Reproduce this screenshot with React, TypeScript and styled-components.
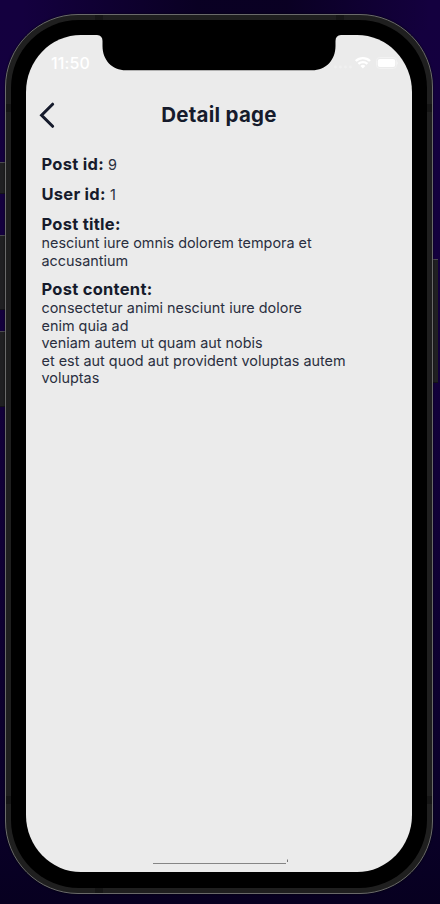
import React from "react";
import styled, { createGlobalStyle } from "styled-components";

const GlobalStyle = createGlobalStyle`
  * { box-sizing: border-box; }
  html, body { margin: 0; padding: 0; }
  body { width: 440px; height: 904px; overflow: hidden; background: #0c0028; }
`;

const Desktop = styled.div`
  position: relative;
  width: 440px;
  height: 904px;
  padding: 14px 7px 10px 5px;
  overflow: hidden;
  font-family: Inter, "Liberation Sans", sans-serif;
  background:
    linear-gradient(90deg, transparent 5%, rgba(8, 0, 30, 0.85) 45%, rgba(8, 0, 30, 0.85) 65%, transparent 98%) top / 100% 30px no-repeat,
    linear-gradient(180deg, #14003f 0%, #14003e 30%, #100036 60%, #0a0029 90%, #070020 100%);
`;

const SideButton = styled.div<{ $side: "left" | "right"; $top: number; $height: number }>`
  position: absolute;
  ${(p) => (p.$side === "left" ? "left: -2px; width: 8px;" : "left: 432px; width: 6px;")}
  top: ${(p) => p.$top}px;
  height: ${(p) => p.$height}px;
  background: #202022;
  border-top: 1px solid #4b4a50;
  border-bottom: 1px solid #131217;
`;

const Frame = styled.div`
  position: relative;
  height: 880px;
  padding: 5px;
  border: 1px solid #6a6a6a;
  border-radius: 73px;
  background:
    linear-gradient(#161616, #161616) 89px 0 / 8px 5px no-repeat,
    linear-gradient(#161616, #161616) 330px 0 / 8px 5px no-repeat,
    linear-gradient(#161616, #161616) 89px 100% / 8px 5px no-repeat,
    linear-gradient(#161616, #161616) 0 89px / 5px 8px no-repeat,
    linear-gradient(#161616, #161616) 100% 89px / 5px 8px no-repeat,
    linear-gradient(#161616, #161616) 0 781px / 5px 8px no-repeat,
    linear-gradient(#161616, #161616) 100% 781px / 5px 8px no-repeat,
    #1f1f1f;
  box-shadow: 0 0 2px rgba(0, 0, 0, 0.8);
`;

const Bezel = styled.div`
  height: 868px;
  padding: 15px;
  border-radius: 68px;
  background: #000;
`;

const Screen = styled.div`
  position: relative;
  height: 837px;
  border-radius: 55px / 57px;
  overflow: hidden;
  background: #ebebeb;
  color: #161b2c;
  display: flex;
  flex-direction: column;
`;

const Notch = styled.svg`
  position: absolute;
  left: 69px;
  top: 0;
`;

const StatusBar = styled.div`
  height: 56px;
  padding: 19px 14px 0 25px;
  display: flex;
  justify-content: space-between;
  color: #fff;
`;

const Clock = styled.span`
  font-size: 16px;
  line-height: 18px;
  font-weight: 500;
  letter-spacing: 0.15px;
`;

const Header = styled.header`
  height: 48px;
  display: grid;
  grid-template-columns: 40px 1fr 40px;
  align-items: center;
`;

const BackButton = styled.button`
  display: flex;
  padding: 0 0 0 13px;
  border: 0;
  background: none;
  color: inherit;
`;

const Title = styled.h1`
  margin: 0;
  text-align: center;
  font-size: 20.5px;
  line-height: 24px;
  font-weight: 700;
  letter-spacing: 0.27px;
`;

const Details = styled.main`
  flex: 1;
  padding: 15px 15.5px;
  display: flex;
  flex-direction: column;
  gap: 10px;
`;

const Field = styled.div`
  font-size: 14.4px;
  line-height: 17.5px;
  letter-spacing: 0.01px;
  color: #2a2f40;
`;

const Label = styled.strong<{ $block?: boolean }>`
  display: ${(p) => (p.$block ? "block" : "inline-block")};
  font-size: 16.5px;
  line-height: 20px;
  font-weight: 700;
  letter-spacing: 0.27px;
  color: #161b2c;
`;

const Line = styled.div`
  white-space: nowrap;
`;

const HomeIndicator = styled.svg`
  display: block;
  margin: 0 0 8px 126px;
`;

const fields = [
  { label: "Post id:", value: "9" },
  { label: "User id:", value: "1" },
  { label: "Post title:", lines: ["nesciunt iure omnis dolorem tempora et", "accusantium"] },
  {
    label: "Post content:",
    lines: [
      "consectetur animi nesciunt iure dolore",
      "enim quia ad",
      "veniam autem ut quam aut nobis",
      "et est aut quod aut provident voluptas autem",
      "voluptas",
    ],
  },
];

function StatusIcons() {
  return (
    <svg width="64" height="18" viewBox="0 0 64 18" fill="none">
      <g fill="#f0f0f0">
        <circle cx="1.5" cy="13" r="1.4" />
        <circle cx="6.5" cy="13" r="1.4" />
        <circle cx="11.5" cy="13" r="1.4" />
        <circle cx="16.5" cy="13" r="1.4" />
      </g>
      <g transform="translate(7.2 0)">
        <g stroke="#fff" strokeWidth="2.4">
          <path d="M14.6 7a10.2 10.2 0 0 1 14.2 0" />
          <path d="M17.2 9.9a6.5 6.5 0 0 1 9 0" />
        </g>
        <path d="M19.2 12a3.6 3.6 0 0 1 5 0L21.7 14.6z" fill="#fff" />
      </g>
      <rect x="42.5" y="3.5" width="20" height="11" rx="3.3" stroke="#f2f2f2" />
      <rect x="43.8" y="5" width="17.4" height="8" rx="2" fill="#fff" />
      <path d="M63.4 7.4q1.4 1.7 0 3.4z" fill="#f6f6f6" />
    </svg>
  );
}

export default function App() {
  return (
    <>
      <GlobalStyle />
      <Desktop>
        <SideButton $side="left" $top={162} $height={32} />
        <SideButton $side="left" $top={235} $height={75} />
        <SideButton $side="left" $top={331} $height={76} />
        <SideButton $side="right" $top={259} $height={124} />
        <Frame>
          <Bezel>
            <Screen>
              <Notch width="248" height="36" viewBox="0 0 248 36">
                <path
                  d="M0 0H2Q7.5 .5 7.5 6V11C7.5 25 17 35.3 31 35.3H217C231 35.3 240.5 25 240.5 11V6Q240.5 .5 246 0H248Z"
                  fill="#000"
                />
              </Notch>
              <StatusBar>
                <Clock>11:50</Clock>
                <StatusIcons />
              </StatusBar>
              <Header>
                <BackButton aria-label="Back">
                  <svg width="16" height="26" viewBox="0 0 16 26" fill="none">
                    <path
                      d="M13.6 2.2L2.6 13.3L13.6 24.3"
                      stroke="#161b2c"
                      strokeWidth="3"
                      strokeLinecap="round"
                    />
                  </svg>
                </BackButton>
                <Title>Detail page</Title>
              </Header>
              <Details>
                {fields.map((f) => (
                  <Field key={f.label}>
                    <Label $block={!!f.lines}>{f.label}</Label>
                    {f.value && ` ${f.value}`}
                    {f.lines?.map((line) => <Line key={line}>{line}</Line>)}
                  </Field>
                ))}
              </Details>
              <HomeIndicator width="140" height="6" viewBox="0 0 140 6">
                <path d="M1 5.5H134" stroke="#858585" />
                <path d="M135.5 1.5V4" stroke="#777" />
              </HomeIndicator>
            </Screen>
          </Bezel>
        </Frame>
      </Desktop>
    </>
  );
}
